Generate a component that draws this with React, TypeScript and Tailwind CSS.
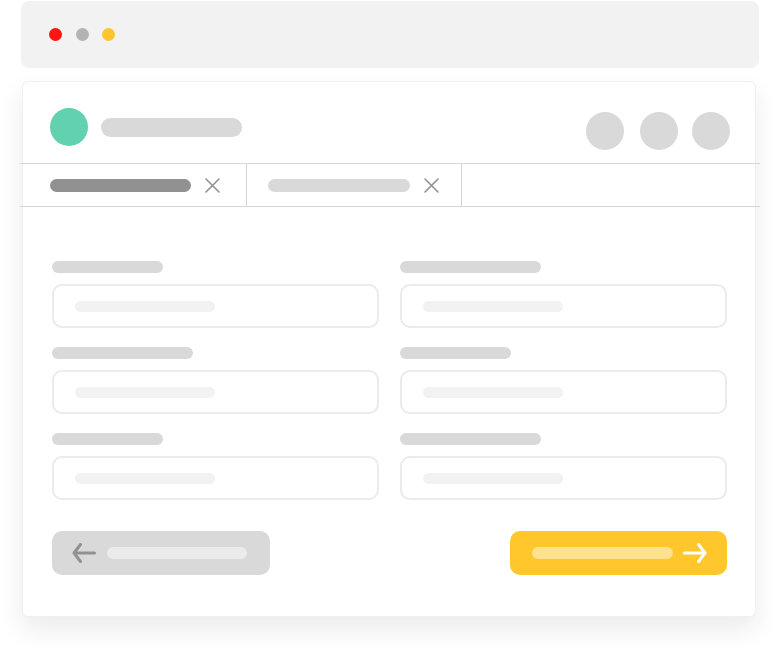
import type { ReactNode } from 'react';

function Bar({ className }: { className: string }) {
  return <div className={`rounded-full ${className}`} />;
}

function CloseIcon() {
  return (
    <svg width="15" height="15" viewBox="0 0 15 15" className="shrink-0">
      <path
        d="M1 1L14 14M14 1L1 14"
        stroke="#919191"
        strokeWidth="1.6"
        strokeLinecap="round"
      />
    </svg>
  );
}

function Arrow({ color, flip }: { color: string; flip?: boolean }) {
  return (
    <svg
      width="24"
      height="20"
      viewBox="0 0 24 20"
      className={`shrink-0 ${flip ? 'rotate-180' : ''}`}
    >
      <path
        d="M22.5 10H2M8.5 1.5L2 10L8.5 18.5"
        fill="none"
        stroke={color}
        strokeWidth="3"
        strokeLinecap="round"
        strokeLinejoin="round"
      />
    </svg>
  );
}

function Field({ label }: { label: string }) {
  return (
    <div className="flex flex-col">
      <Bar className={`h-[12px] ${label} bg-[#d9d9d9]`} />
      <div className="mt-[11px] flex h-[44px] items-center rounded-[10px] border-2 border-[#ebebeb] pl-[21px]">
        <Bar className="h-[11px] w-[140px] bg-[#f2f2f2]" />
      </div>
    </div>
  );
}

function Tab({ children, className }: { children: ReactNode; className: string }) {
  return (
    <div
      className={`flex h-full items-center gap-[14px] border-r-[1.5px] border-[#d6d6d6] ${className}`}
    >
      {children}
      <CloseIcon />
    </div>
  );
}

export default function App() {
  return (
    <div className="h-[655px] w-[778px] overflow-hidden bg-white pl-[21px] pt-px">
      {/* window chrome */}
      <div className="flex h-[67px] w-[738px] items-center gap-[13.5px] rounded-[8px] bg-[#f2f2f2] pl-[28px]">
        <span className="h-[13px] w-[13px] rounded-full bg-[#ff1414]" />
        <span className="h-[13px] w-[13px] rounded-full bg-[#b3b3b3]" />
        <span className="h-[13px] w-[13px] rounded-full bg-[#ffc52c]" />
      </div>

      {/* card */}
      <div className="ml-px mt-[13px] flex w-[734px] flex-col rounded-[6px] border border-[#f0f0f0] bg-white shadow-[0_12px_24px_rgba(20,30,50,0.09)]">
        <header className="flex h-[81px] items-start justify-between pl-[27px] pr-[25px]">
          <div className="mt-[26px] flex items-center gap-[13px]">
            <span className="h-[38px] w-[38px] rounded-full bg-[#61d1af]" />
            <Bar className="h-[19px] w-[141px] bg-[#d9d9d9]" />
          </div>
          <div className="mt-[30px] flex">
            <span className="mr-[16px] h-[38px] w-[38px] rounded-full bg-[#d9d9d9]" />
            <span className="mr-[14px] h-[38px] w-[38px] rounded-full bg-[#d9d9d9]" />
            <span className="h-[38px] w-[38px] rounded-full bg-[#d9d9d9]" />
          </div>
        </header>

        <nav className="-ml-[3px] -mr-[5px] flex h-[44px] border-y-[1.5px] border-[#d6d6d6]">
          <Tab className="pl-[30px] pr-[26px]">
            <Bar className="h-[13px] w-[141px] bg-[#919191]" />
          </Tab>
          <Tab className="pl-[20.5px] pr-[22px]">
            <Bar className="h-[13px] w-[142px] bg-[#d9d9d9]" />
          </Tab>
        </nav>

        <section className="pb-[41px] pl-[29px] pr-[28px] pt-[54px]">
          <div className="grid grid-cols-2 gap-x-[21px] gap-y-[19px]">
            <Field label="w-[111px]" />
            <Field label="w-[141px]" />
            <Field label="w-[141px]" />
            <Field label="w-[111px]" />
            <Field label="w-[111px]" />
            <Field label="w-[141px]" />
          </div>

          <div className="mt-[31px] flex justify-between">
            <button
              type="button"
              className="flex h-[44px] w-[218px] items-center gap-[11px] rounded-[10px] bg-[#d9d9d9] pl-[20px]"
            >
              <Arrow color="#919191" />
              <Bar className="h-[12px] w-[140px] bg-[#ebebeb]" />
            </button>
            <button
              type="button"
              className="flex h-[44px] w-[217px] items-center gap-[10px] rounded-[10px] bg-[#ffc72c] pl-[22px]"
            >
              <Bar className="h-[12px] w-[141px] bg-[#ffe28f]" />
              <Arrow color="#ffffff" flip />
            </button>
          </div>
        </section>
      </div>
    </div>
  );
}
